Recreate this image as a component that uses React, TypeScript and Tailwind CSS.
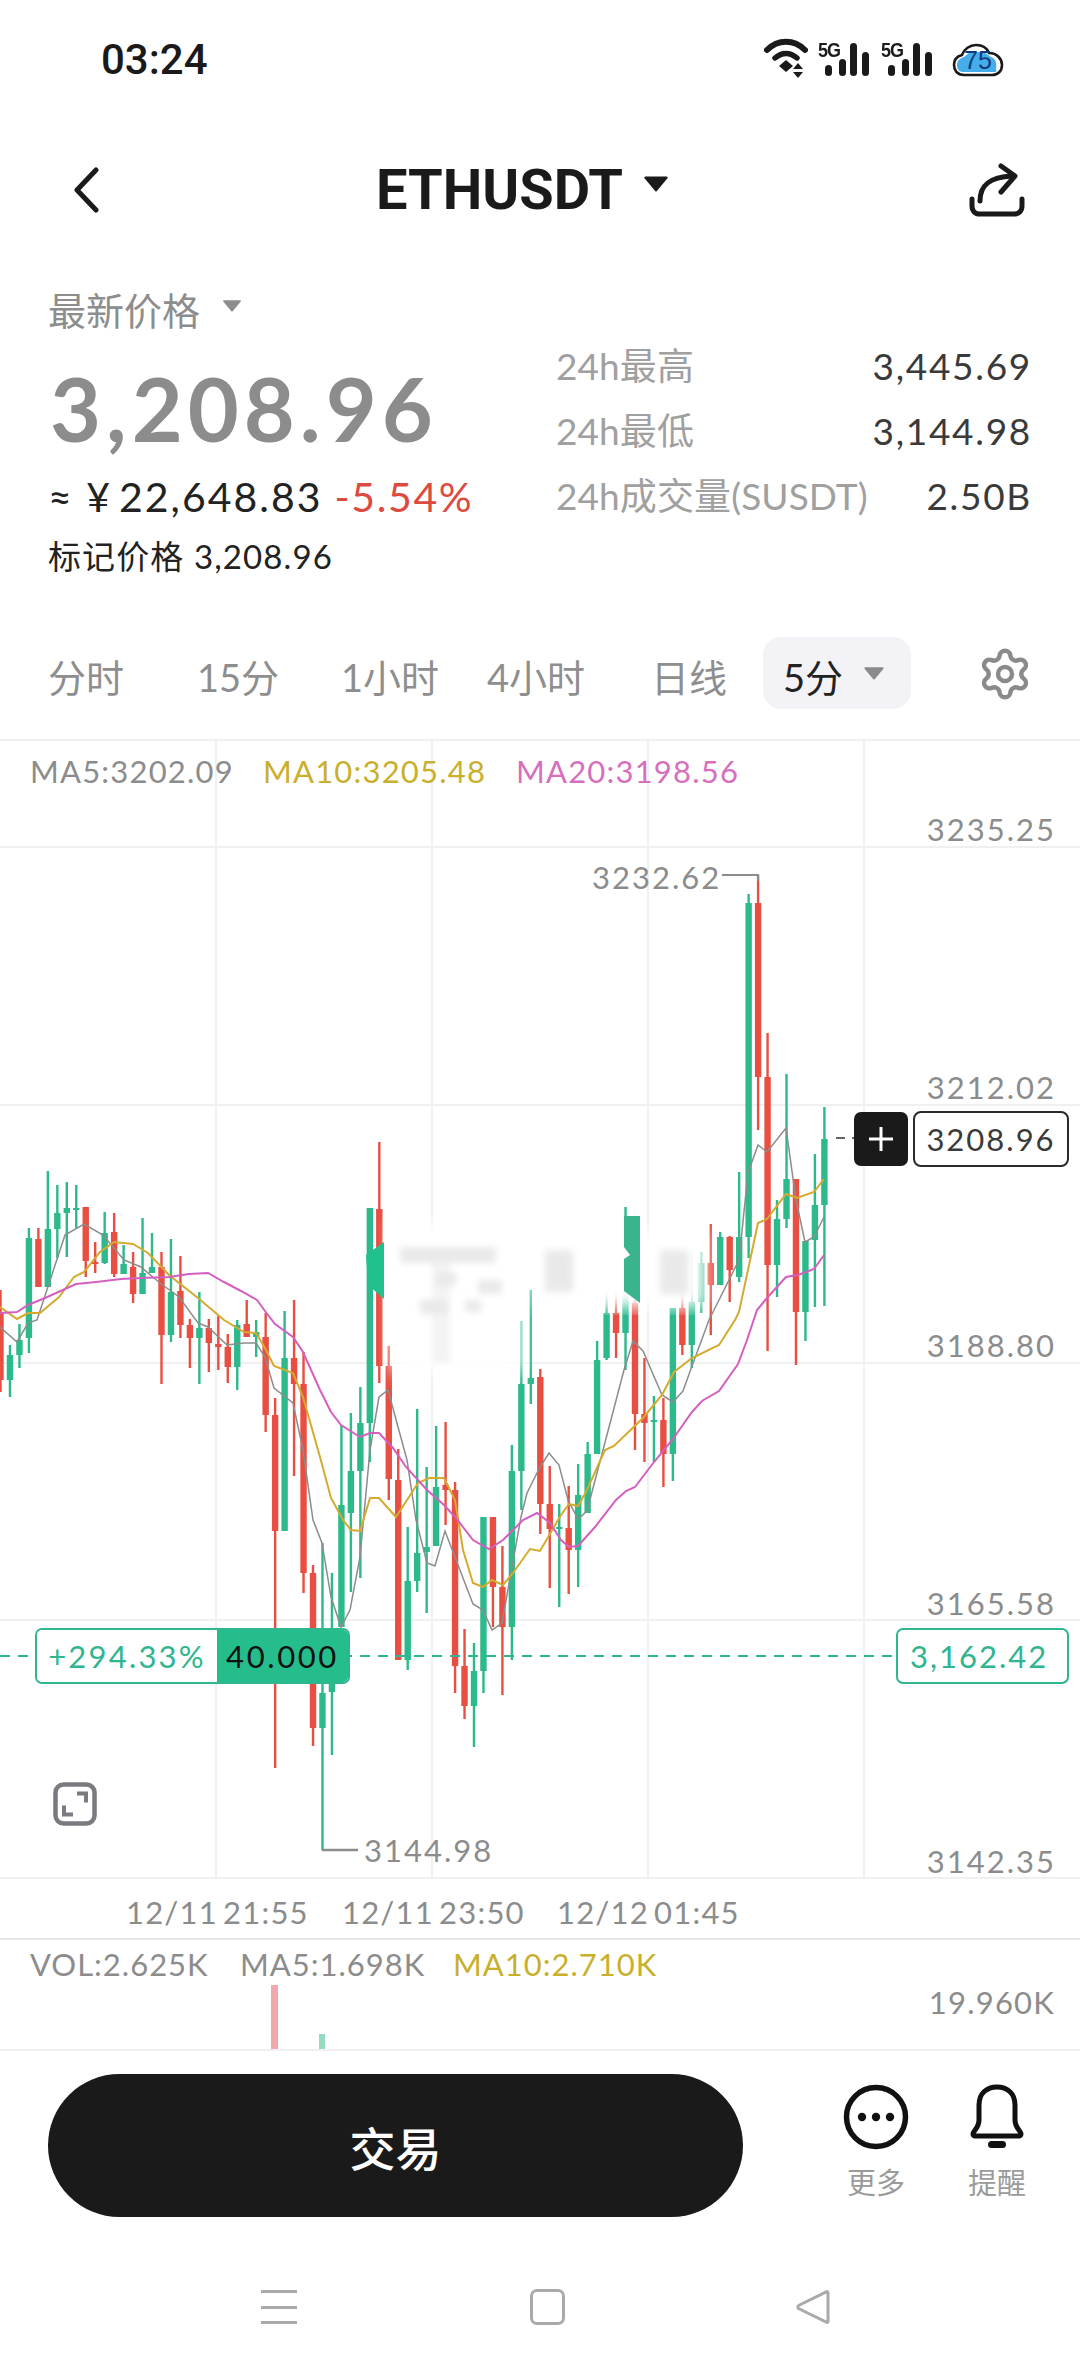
import { Settings } from "lucide-react";

type Candle = [0 | 1, number, number, number, number];

// [isGreen, wickTop, bodyTop, bodyBottom, wickBottom], y in chart-page pixels
const candles: Candle[] = [
  [0,1290,1313,1380,1392],[1,1345,1355,1380,1397],[1,1324,1340,1355,1368],[1,1228,1238,1338,1353],
  [0,1228,1239,1287,1287],[1,1171,1229,1287,1287],[1,1185,1213,1229,1258],[1,1182,1208,1213,1257],
  [1,1185,1208,1210,1228],[0,1207,1207,1261,1277],[0,1242,1262,1263,1273],[1,1212,1233,1263,1264],
  [0,1213,1232,1274,1277],[1,1245,1264,1274,1274],[0,1252,1267,1294,1303],[1,1218,1273,1294,1294],
  [1,1233,1267,1273,1273],[0,1252,1267,1335,1384],[1,1239,1292,1335,1342],[0,1256,1291,1325,1338],
  [0,1319,1325,1338,1368],[1,1292,1328,1338,1384],[0,1319,1328,1343,1372],[0,1316,1344,1347,1370],
  [0,1334,1347,1367,1383],[1,1320,1325,1367,1390],[0,1300,1324,1337,1337],[1,1320,1332,1337,1357],
  [0,1313,1337,1415,1432],[0,1398,1415,1531,1768],[1,1311,1358,1531,1531],[0,1300,1358,1384,1476],
  [0,1352,1384,1573,1593],[0,1565,1573,1728,1746],[1,1543,1693,1728,1850],[1,1573,1682,1692,1755],
  [1,1425,1505,1627,1627],[1,1413,1471,1513,1592],[1,1387,1423,1471,1578],[1,1208,1208,1423,1462],
  [0,1142,1209,1366,1383],[0,1346,1366,1479,1500],[0,1449,1480,1660,1660],[1,1527,1581,1660,1670],
  [1,1409,1553,1581,1592],[1,1467,1547,1552,1613],[1,1426,1487,1546,1546],[0,1422,1485,1490,1525],
  [0,1482,1490,1666,1693],[0,1629,1666,1706,1719],[1,1643,1671,1706,1747],[1,1517,1517,1671,1693],
  [0,1517,1517,1587,1627],[0,1546,1587,1627,1695],[1,1445,1471,1627,1660],[1,1321,1384,1471,1510],
  [1,1290,1378,1384,1404],[0,1369,1377,1504,1534],[0,1466,1504,1529,1588],[1,1504,1527,1529,1607],
  [0,1486,1528,1550,1594],[1,1464,1495,1550,1587],[1,1442,1454,1513,1513],[1,1341,1360,1454,1454],
  [1,1262,1313,1358,1360],[0,1262,1313,1333,1358],[1,1207,1280,1333,1370],[0,1300,1303,1414,1450],
  [0,1358,1414,1423,1462],[1,1396,1420,1421,1462],[0,1398,1420,1454,1487],[1,1308,1308,1454,1481],
  [0,1287,1308,1345,1355],[1,1252,1302,1345,1368],[1,1252,1263,1302,1313],[0,1224,1263,1285,1335],
  [1,1232,1237,1285,1285],[0,1236,1237,1270,1302],[1,1172,1237,1277,1282],[1,894,903,1237,1258],
  [0,875,903,1077,1130],[0,1033,1077,1265,1351],[1,1200,1219,1265,1297],[1,1074,1179,1219,1228],
  [0,1179,1179,1312,1365],[1,1241,1241,1312,1341],[1,1154,1205,1240,1307],[1,1107,1139,1205,1306],
];

const ma5 = "0,1327 17,1342 28,1323 37,1320 65,1235 84,1224 103,1235 124,1260 141,1267 160,1283 179,1297 198,1323 208,1327 227,1345 244,1343 256,1343 265,1357 274,1388 293,1403 303,1450 313,1520 322,1543 331,1597 341,1627 350,1610 360,1557 370,1450 379,1397 388,1390 407,1460 416,1520 427,1563 435,1566 445,1531 473,1604 483,1610 492,1630 502,1623 521,1517 527,1493 540,1467 549,1453 559,1465 568,1500 578,1519 587,1511 624,1370 633,1341 643,1351 662,1395 673,1402 683,1391 692,1366 709,1320 739,1260 748,1173 758,1145 767,1152 786,1128 796,1200 805,1242 814,1237 824,1217";
const ma10 = "0,1307 17,1319 28,1313 40,1313 59,1297 74,1277 84,1272 100,1252 114,1242 133,1244 148,1253 169,1275 198,1298 224,1320 244,1332 256,1333 265,1348 274,1366 293,1373 303,1397 320,1457 331,1498 343,1520 351,1530 360,1531 370,1498 379,1498 396,1517 418,1483 429,1478 444,1478 455,1500 463,1550 473,1583 483,1587 492,1580 503,1585 513,1573 530,1549 540,1551 561,1515 569,1504 578,1506 586,1492 605,1450 614,1446 643,1418 662,1395 674,1372 692,1358 719,1345 735,1320 739,1312 758,1223 767,1219 786,1194 797,1198 814,1192 824,1179";
const ma20 = "0,1313 17,1312 28,1305 45,1298 65,1289 76,1284 96,1282 121,1279 141,1278 169,1277 189,1274 208,1273 224,1282 241,1291 257,1300 265,1311 275,1324 293,1337 303,1352 320,1390 331,1412 341,1425 360,1437 370,1433 379,1433 393,1448 406,1467 427,1490 444,1505 456,1518 473,1540 489,1549 503,1540 523,1520 537,1513 550,1523 561,1540 569,1547 578,1546 595,1527 616,1500 626,1491 635,1487 654,1462 673,1439 692,1412 702,1401 719,1391 738,1364 747,1340 757,1310 767,1298 786,1277 798,1275 814,1269 824,1255";

const smudges = [
  [400, 1247, 96, 16], [432, 1263, 18, 100], [436, 1272, 20, 14], [478, 1280, 24, 14],
  [420, 1300, 28, 14], [465, 1300, 16, 12], [545, 1250, 28, 42], [660, 1250, 28, 44],
];

function Caret({ className }: { className: string }) {
  return (
    <svg viewBox="0 0 24 16" className={className}>
      <path d="M2 1.5h20a1 1 0 0 1 .8 1.6L12.8 15a1 1 0 0 1-1.6 0L1.2 3.1A1 1 0 0 1 2 1.5z" fill="currentColor" />
    </svg>
  );
}

function Signal() {
  return (
    <div className="relative w-[52px] h-[36px]">
      <span className="absolute left-0 top-0 text-[20px] leading-[16px] font-bold font-['Liberation_Sans',sans-serif] tracking-[-1px] text-[#1a1a1a] scale-x-90 origin-left">5G</span>
      <svg viewBox="0 0 52 36" className="absolute inset-0 w-[52px] h-[36px]">
        <g fill="#1a1a1a">
          <rect x="7" y="23" width="7" height="11" rx="3.5" />
          <rect x="21" y="17" width="7" height="17" rx="3.5" />
          <rect x="32" y="1" width="7" height="33" rx="3.5" />
          <rect x="44" y="10" width="7" height="24" rx="3.5" />
        </g>
      </svg>
    </div>
  );
}

function StatusBar() {
  return (
    <div className="h-[120px] flex items-start justify-between pl-[101px] pr-[76px] text-[#1a1a1a]">
      <span className="mt-[36px] text-[42px] leading-[48px] font-medium font-['Roboto',sans-serif]">03:24</span>
      <div className="mt-[37px] flex items-start">
        <svg viewBox="0 0 44 42" className="w-[44px] h-[42px]">
          <path d="M3 13C14 2 30 2 41 13" fill="none" stroke="#1a1a1a" strokeWidth="6" strokeLinecap="round" />
          <path d="M11 21c7-6 15-6 22 0" fill="none" stroke="#1a1a1a" strokeWidth="5.5" strokeLinecap="round" />
          <path d="M15 29l7-6 7 6-7 6z" fill="#1a1a1a" />
          <path d="M29 32l5-6 5 6zM29 35l5 6 5-6z" fill="#1a1a1a" />
        </svg>
        <div className="ml-[10px] mt-[5px]"><Signal /></div>
        <div className="ml-[11px] mt-[5px]"><Signal /></div>
        <div className="relative ml-[19px] mt-[6px] w-[52px] h-[34px]">
          <svg viewBox="0 0 52 34" className="absolute inset-0 w-[52px] h-[34px]">
            <path d="M12 32C5 32 2 27 2 22c0-6 4-9 8-10 2-6 8-10 14-10 6 0 11 3 13 8 8 0 13 6 13 12 0 6-4 10-10 10z" fill="#fff" stroke="#1a1a1a" strokeWidth="2.6" />
            <path d="M11 29c-4 0-6-3-6-7 0-4 3-7 7-8l6-5h14l7 5c5 2 6 5 5 15z" fill="#45aeea" />
          </svg>
          <span className="absolute inset-0 flex items-center justify-center text-[25px] font-['Liberation_Sans',sans-serif] text-[#123a7a] pt-[1px]">75</span>
        </div>
      </div>
    </div>
  );
}

function TitleBar() {
  return (
    <div className="h-[160px] flex items-center pl-[72px] pr-[55px] pb-[20px] text-[#1a1a1a]">
      <svg viewBox="0 0 28 46" className="w-[28px] h-[46px]">
        <path d="M24 3L5 23l19 20" fill="none" stroke="#1a1a1a" strokeWidth="5" strokeLinecap="round" strokeLinejoin="round" />
      </svg>
      <div className="flex items-center ml-[276px]">
        <span className="text-[56px] leading-[64px] font-bold font-['Roboto',sans-serif]">ETHUSDT</span>
        <Caret className="w-[26px] h-[17px] ml-[20px] mb-[14px]" />
      </div>
      <svg viewBox="0 0 56 54" className="ml-auto w-[56px] h-[54px]">
        <path d="M3 36v7c0 5 3 8 8 8h34c5 0 8-3 8-8v-7" fill="none" stroke="#1a1a1a" strokeWidth="5" strokeLinecap="round" />
        <path d="M11 38c0-16 10-24 32-25" fill="none" stroke="#1a1a1a" strokeWidth="5" strokeLinecap="round" />
        <path d="M32 3l14 10-14 16" fill="none" stroke="#1a1a1a" strokeWidth="5" strokeLinecap="round" strokeLinejoin="round" />
      </svg>
    </div>
  );
}

function Stat({ label, value }: { label: string; value: string }) {
  return (
    <div className="h-[65px] flex items-center justify-between">
      <span className="text-[37px] text-[#a0a0a0] tracking-[0.1px]">{label}</span>
      <span className="text-[37px] text-[#3a3a3a] tracking-[1.7px]">{value}</span>
    </div>
  );
}

function PriceInfo() {
  return (
    <div className="h-[357px] flex pl-[48px] pr-[48px]">
      <div className="w-[508px] shrink-0">
        <div className="h-[60px] flex items-center text-[#8d8d8d]">
          <span className="text-[38px]">最新价格</span>
          <Caret className="w-[20px] h-[13px] ml-[22px] mb-[10px]" />
        </div>
        <div className="h-[128px] flex items-center pl-[2px] pt-[8px] text-[88px] font-bold text-[#8c8c8c] tracking-[5px]">3,208.96</div>
        <div className="h-[58px] flex items-center text-[41px] tracking-[2px] text-[#222]">
          <span>≈ ¥</span>
          <span className="ml-[7px]">22,648.83</span>
          <span className="ml-[12px] text-[#dd4b40] tracking-[1.6px]">-5.54%</span>
        </div>
        <div className="h-[62px] flex items-center text-[33px] text-[#222] tracking-[1.1px]">标记价格 3,208.96</div>
      </div>
      <div className="flex-1 pt-[53px]">
        <Stat label="24h最高" value="3,445.69" />
        <Stat label="24h最低" value="3,144.98" />
        <Stat label="24h成交量(SUSDT)" value="2.50B" />
      </div>
    </div>
  );
}

function Tabs() {
  return (
    <div className="h-[102px] relative text-[38px] text-[#8e8e8e]">
      <div className="h-[72px] flex items-center pl-[48px] pt-[8px]">
        <span className="w-[149px]">分时</span>
        <span className="w-[144px]">15分</span>
        <span className="w-[146px]">1小时</span>
        <span className="w-[164px]">4小时</span>
        <span className="w-[112px]">日线</span>
        <div className="h-[72px] w-[148px] -mt-[8px] rounded-[18px] bg-[#f2f2f7] flex items-center pl-[20px] text-[#222]">
          <span className="pt-[8px]">5分</span>
          <Caret className="w-[22px] h-[14px] ml-[20px] text-[#8a8a8a]" />
        </div>
        <Settings className="w-[56px] h-[56px] ml-[66px] -mt-[6px] text-[#8a8a8a]" strokeWidth={1.9} />
      </div>
    </div>
  );
}

function ChartDrawing() {
  return (
    <svg viewBox="0 739 1080 1140" className="absolute inset-0 w-[1080px] h-[1140px]">
      <defs>
        <filter id="smudge"><feGaussianBlur stdDeviation="3" /></filter>
        <filter id="patch"><feGaussianBlur stdDeviation="8" /></filter>
      </defs>
      <g stroke="#f0f0f0" strokeWidth="2">
        {[740, 847, 1105, 1363, 1620, 1878].map((y) => <line key={y} x1="0" x2="1080" y1={y} y2={y} />)}
        {[216, 432, 648, 864].map((x) => <line key={x} x1={x} x2={x} y1="739" y2="1879" />)}
      </g>
      {candles.map(([up, wickTop, bodyTop, bodyBottom, wickBottom], i) => {
        const x = i * 9.47 + 0.5;
        const color = up ? "#2cb98c" : "#e84f42";
        return (
          <g key={i} fill={color}>
            <rect x={x - 1.2} y={wickTop} width="2.4" height={wickBottom - wickTop} />
            <rect x={x - 3.2} y={bodyTop} width="6.4" height={Math.max(bodyBottom - bodyTop, 2)} />
          </g>
        );
      })}
      <polyline points={ma5} fill="none" stroke="#8c8c8c" strokeWidth="1.5" />
      <polyline points={ma10} fill="none" stroke="#d4ab2e" strokeWidth="2" />
      <polyline points={ma20} fill="none" stroke="#d45fc0" strokeWidth="2" />

      {/* blurred-out watermark */}
      <rect x="392" y="1222" width="130" height="150" fill="#fff" filter="url(#patch)" />
      <rect x="535" y="1232" width="170" height="75" fill="#fff" filter="url(#patch)" />
      <g fill="#e4e4e4" filter="url(#smudge)" opacity="0.8">
        {smudges.map(([x, y, w, h], i) => <rect key={i} x={x} y={y} width={w} height={h} opacity={i === 1 ? 0.5 : 1} />)}
      </g>
      <path d="M384 1242v57l-16-14-2-30z" fill="#22c08c" />
      <path d="M624 1216h16v87l-16-12v-32l6-4-6-8z" fill="#3ab48e" />

      {/* high / low leaders */}
      <path d="M722 875h36v6" fill="none" stroke="#8c8c8c" strokeWidth="2" />
      <path d="M322 1850h36" fill="none" stroke="#8c8c8c" strokeWidth="2.5" />

      {/* last price and position lines */}
      <path d="M836 1138h9M852 1138h4" stroke="#333" strokeWidth="1.5" />
      <line x1="0" x2="896" y1="1656" y2="1656" stroke="#2fb58f" strokeWidth="2" strokeDasharray="10 8" />
    </svg>
  );
}

function AxisLabel({ className, children }: { className: string; children: string }) {
  return <span className={`absolute leading-[36px] text-[31px] tracking-[2px] text-[#8c8c8c] ${className}`}>{children}</span>;
}

function Chart() {
  return (
    <div className="relative h-[1140px]">
      <ChartDrawing />
      <div className="absolute left-[30px] top-[14px] flex text-[31px] leading-[36px] tracking-[1.2px]">
        <span className="w-[233px] text-[#8c8c8c]">MA5:3202.09</span>
        <span className="w-[253px] text-[#c9b02c]">MA10:3205.48</span>
        <span className="text-[#d66fbd]">MA20:3198.56</span>
      </div>
      <AxisLabel className="right-[24px] top-[72px]">3235.25</AxisLabel>
      <AxisLabel className="right-[24px] top-[330px]">3212.02</AxisLabel>
      <AxisLabel className="right-[24px] top-[588px]">3188.80</AxisLabel>
      <AxisLabel className="right-[24px] top-[846px]">3165.58</AxisLabel>
      <AxisLabel className="right-[24px] top-[1104px]">3142.35</AxisLabel>
      <AxisLabel className="left-[592px] top-[120px]">3232.62</AxisLabel>
      <AxisLabel className="left-[364px] top-[1093px]">3144.98</AxisLabel>

      <div className="absolute left-[854px] top-[373px] w-[54px] h-[54px] rounded-[7px] bg-[#1a1a1a] flex items-center justify-center">
        <svg viewBox="0 0 26 26" className="w-[26px] h-[26px]">
          <path d="M13 1v24M1 13h24" stroke="#fff" strokeWidth="3" />
        </svg>
      </div>
      <div className="absolute left-[913px] top-[372px] w-[156px] h-[56px] rounded-[8px] border-2 border-[#2a2a2a] bg-white flex items-center justify-center text-[31px] tracking-[2px] text-[#3a3a3a]">3208.96</div>

      <div className="absolute left-[35px] top-[889px] w-[315px] h-[56px] flex rounded-[7px] border-2 border-[#2fb58f] overflow-hidden">
        <div className="w-[180px] bg-white flex items-center justify-center text-[31px] tracking-[2.2px] text-[#2fb58f]">+294.33%</div>
        <div className="flex-1 bg-[#25bd8c] flex items-center justify-center text-[31px] tracking-[2.6px] text-[#111]">40.000</div>
      </div>
      <div className="absolute left-[896px] top-[889px] w-[173px] h-[56px] rounded-[7px] border-2 border-[#2fb58f] bg-white flex items-center pl-[12px] text-[31px] tracking-[2px] text-[#2fb58f]">3,162.42</div>

      <svg viewBox="0 0 44 44" className="absolute left-[53px] top-[1043px] w-[44px] h-[44px]">
        <rect x="2.5" y="2.5" width="39" height="39" rx="8" fill="none" stroke="#7a7a80" strokeWidth="4.5" />
        <path d="M24 11.5h9v9M11 23.5v9h9" fill="none" stroke="#7a7a80" strokeWidth="4" />
      </svg>
    </div>
  );
}

function VolumePanel() {
  return (
    <div className="relative h-[113px] border-t-2 border-[#e6e6e6] border-b-2 border-b-[#f0f0f0]">
      <div className="absolute left-[30px] top-[6px] flex text-[31px] leading-[36px] tracking-[1px]">
        <span className="w-[210px] text-[#8c8c8c]">VOL:2.625K</span>
        <span className="w-[213px] text-[#8c8c8c]">MA5:1.698K</span>
        <span className="text-[#c9b02c]">MA10:2.710K</span>
      </div>
      <span className="absolute right-[25px] top-[44px] text-[31px] leading-[36px] tracking-[1.2px] text-[#8c8c8c]">19.960K</span>
      <div className="absolute left-[271px] bottom-0 w-[7px] h-[64px] bg-[#f0a8ac]" />
      <div className="absolute left-[319px] bottom-0 w-[6px] h-[15px] bg-[#93dcc0]" />
    </div>
  );
}

function BottomBar() {
  return (
    <div className="flex pl-[48px] pt-[23px]">
      <div className="w-[695px] h-[143px] pt-[6px] rounded-full bg-[#1a1a1a] flex items-center justify-center text-[46px] font-medium text-white">交易</div>
      <div className="ml-[83px] w-[100px] pt-[10px] flex flex-col items-center">
        <svg viewBox="0 0 66 66" className="w-[66px] h-[66px]">
          <circle cx="33" cy="33" r="29.5" fill="none" stroke="#111" strokeWidth="5.5" />
          <circle cx="19" cy="33" r="4.2" fill="#111" />
          <circle cx="33" cy="33" r="4.2" fill="#111" />
          <circle cx="47" cy="33" r="4.2" fill="#111" />
        </svg>
        <span className="mt-[15px] text-[29px] leading-[36px] text-[#9a9a9a]">更多</span>
      </div>
      <div className="ml-[21px] w-[100px] pt-[10px] flex flex-col items-center">
        <svg viewBox="0 0 56 66" className="w-[56px] h-[66px]">
          <path d="M4 50c0-3 6-6 6-14V21C10 9 18 3 28 3s18 6 18 18v15c0 8 6 11 6 14 0 1-1 2-2 2H6c-1 0-2-1-2-2z" fill="none" stroke="#111" strokeWidth="5" strokeLinejoin="round" />
          <rect x="19" y="57" width="18" height="7" rx="3.5" fill="#111" />
        </svg>
        <span className="mt-[15px] text-[29px] leading-[36px] text-[#9a9a9a]">提醒</span>
      </div>
    </div>
  );
}

function NavBar() {
  return (
    <div className="flex items-center pl-[261px] pt-[72px]">
      <div className="w-[36px] h-[34px] flex flex-col justify-between">
        <div className="h-[3px] bg-[#aaaaaa]" />
        <div className="h-[3px] bg-[#aaaaaa]" />
        <div className="h-[3px] bg-[#aaaaaa]" />
      </div>
      <div className="ml-[233px] w-[35px] h-[36px] rounded-[7px] border-[3px] border-[#aaaaaa]" />
      <svg viewBox="0 0 36 36" className="ml-[230px] w-[36px] h-[36px]">
        <path d="M33 3.5v29a1 1 0 0 1-1.7.7L3.5 19.5a2 2 0 0 1 0-3L31.3 2.8a1 1 0 0 1 1.7.7z" fill="none" stroke="#aaaaaa" strokeWidth="3" strokeLinejoin="round" />
      </svg>
    </div>
  );
}

export default function App() {
  return (
    <div className="w-[1080px] h-[2374px] overflow-hidden bg-white font-['Lato','Noto_Sans_CJK_SC',sans-serif]">
      <StatusBar />
      <TitleBar />
      <PriceInfo />
      <Tabs />
      <Chart />
      <div className="h-[59px] flex items-center text-[31px] tracking-[1.2px] [word-spacing:-4px] text-[#8c8c8c] pt-[8px]">
        <span className="ml-[126px] w-[216px]">12/11 21:55</span>
        <span className="w-[215px]">12/11 23:50</span>
        <span>12/12 01:45</span>
      </div>
      <VolumePanel />
      <BottomBar />
      <NavBar />
    </div>
  );
}
